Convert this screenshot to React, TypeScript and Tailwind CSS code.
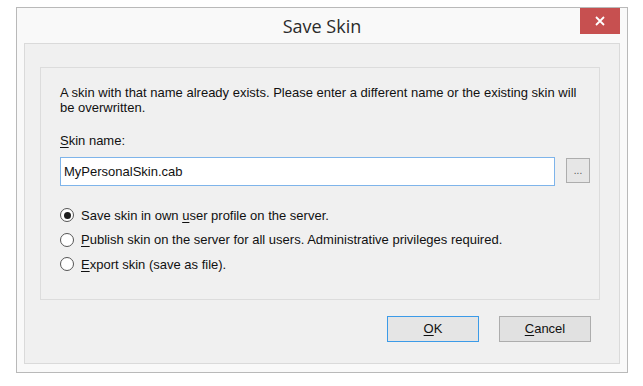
import React from "react";

const font = { fontFamily: '"Liberation Sans", Arial, sans-serif' };

function Radio({ checked, children }: { checked?: boolean; children: React.ReactNode }) {
  return (
    <div className="flex items-center h-[24.5px]">
      <span className="w-[14px] h-[14px] rounded-full border border-[#555] bg-white flex items-center justify-center">
        {checked && <span className="w-[7px] h-[7px] rounded-full bg-[#1e1e1e]" />}
      </span>
      <span className="ml-[7px] text-[13px] text-[#111]">{children}</span>
    </div>
  );
}

export default function App() {
  return (
    <div className="w-[643px] h-[386px] bg-white pt-[7px] pl-[16px]" style={font}>
      <div className="w-[612px] h-[366px] border border-[#b9b9b9] bg-[#f9f9f9] flex flex-col">
        <div className="relative h-[35px] flex items-center justify-center">
          <span className="text-[18px] text-[#2b2b2b] mt-[1px]" style={{ fontFamily: '"Open Sans", "Noto Sans", sans-serif' }}>Save Skin</span>
          <div className="absolute top-0 right-[7px] w-[40px] h-[26px] bg-[#c75050] flex items-center justify-center">
            <svg width="10" height="10" viewBox="0 0 10 10">
              <path d="M1 1 L9 9 M9 1 L1 9" stroke="white" strokeWidth="1.8" />
            </svg>
          </div>
        </div>
        <div className="mx-[7px] h-[321px] border border-[#dadada] bg-[#f0f0f0] pt-[23px] pl-[15px] flex flex-col">
          <div className="w-[560px] h-[233px] border border-[#dcdcdc] pl-[19px] pt-[17px] flex flex-col">
            <p className="text-[13px] leading-[15px] text-[#111] w-[530px]">
              A skin with that name already exists. Please enter a different name or the existing skin will be overwritten.
            </p>
            <div className="mt-[18px] text-[13px] leading-[15px] text-[#111]">
              <span className="underline underline-offset-2">S</span>kin name:
            </div>
            <div className="mt-[9px] flex items-start">
              <div className="w-[495px] h-[29px] border border-[#7eb4ea] bg-white flex items-center pl-[3px] text-[13px] text-[#111]">
                MyPersonalSkin.cab
              </div>
              <div className="ml-[11px] mt-[1px] w-[24px] h-[25px] border border-[#adadad] bg-[#e6e6e6] flex items-end justify-center pb-[6px] text-[10px] leading-[10px] text-[#555]">
                ...
              </div>
            </div>
            <div className="mt-[17px] flex flex-col">
              <Radio checked>
                Save skin in own <span className="underline underline-offset-2">u</span>ser profile on the server.
              </Radio>
              <Radio>
                <span className="underline underline-offset-2">P</span>ublish skin on the server for all users. Administrative privileges required.
              </Radio>
              <Radio>
                <span className="underline underline-offset-2">E</span>xport skin (save as file).
              </Radio>
            </div>
          </div>
          <div className="mt-[16px] flex gap-[20px] pl-[347px]">
            <div className="w-[92px] h-[26px] border border-[#3c9be8] bg-[#e5e5e5] flex items-center justify-center text-[13px] text-[#111]">
              <span className="underline underline-offset-2">O</span>K
            </div>
            <div className="w-[92px] h-[26px] border border-[#adadad] bg-[#e1e1e1] flex items-center justify-center text-[13px] text-[#111]">
              <span className="underline underline-offset-2">C</span>ancel
            </div>
          </div>
        </div>
      </div>
    </div>
  );
}
